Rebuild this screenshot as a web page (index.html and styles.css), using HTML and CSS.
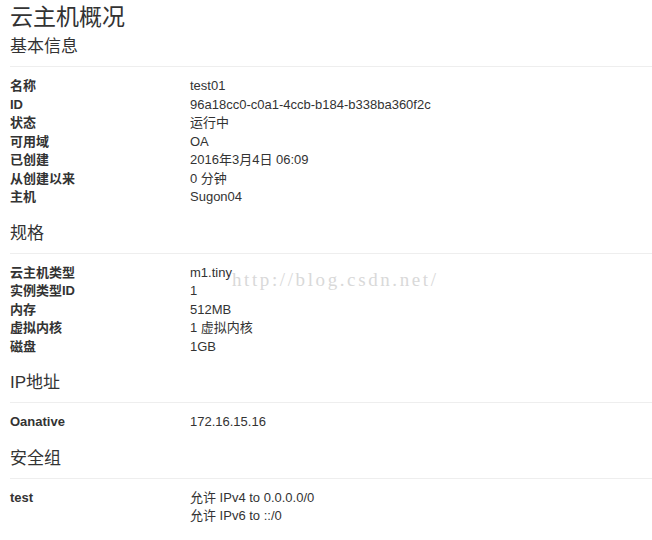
FILE: index.html
```html
<!DOCTYPE html>
<html lang="zh-CN">
<head>
  <meta charset="UTF-8">
  <title>云主机概况</title>
  <link rel="stylesheet" href="styles.css">
</head>
<body>

  <h1 class="page-title">云主机概况</h1>

  <!-- 基本信息 -->
  <h3 class="section-title">基本信息</h3>
  <dl class="info">
    <dt>名称</dt><dd>test01</dd>
    <dt>ID</dt><dd>96a18cc0-c0a1-4ccb-b184-b338ba360f2c</dd>
    <dt>状态</dt><dd>运行中</dd>
    <dt>可用域</dt><dd>OA</dd>
    <dt>已创建</dt><dd>2016年3月4日 06:09</dd>
    <dt>从创建以来</dt><dd>0 分钟</dd>
    <dt>主机</dt><dd>Sugon04</dd>
  </dl>

  <!-- 规格 -->
  <h3 class="section-title">规格</h3>
  <dl class="info">
    <dt>云主机类型</dt><dd>m1.tiny</dd>
    <dt>实例类型ID</dt><dd>1</dd>
    <dt>内存</dt><dd>512MB</dd>
    <dt>虚拟内核</dt><dd>1 虚拟内核</dd>
    <dt>磁盘</dt><dd>1GB</dd>
  </dl>

  <!-- IP地址 -->
  <h3 class="section-title">IP地址</h3>
  <dl class="info">
    <dt>Oanative</dt><dd>172.16.15.16</dd>
  </dl>

  <!-- 安全组 -->
  <h3 class="section-title">安全组</h3>
  <dl class="info">
    <dt>test</dt>
    <dd>
      <div>允许 IPv4 to 0.0.0.0/0</div>
      <div>允许 IPv6 to ::/0</div>
    </dd>
  </dl>

  <span class="watermark">http://blog.csdn.net/</span>

</body>
</html>
```

FILE: styles.css
```css
body {
  font-family: 'Liberation Sans', 'Noto Sans CJK SC', sans-serif;
  font-size: 13px;
  line-height: 18.5px;
  color: #333;
  background: #fff;
  margin: 0;
  padding: 0 0 0 10px;
  position: relative;
}
.page-title {
  font-size: 23px;
  font-weight: normal;
  line-height: 26px;
  margin: 4px 0 0;
}
.section-title {
  font-size: 17px;
  font-weight: normal;
  line-height: 20px;
  margin: 17px 0 0;
  padding-bottom: 9px;
  border-bottom: 1px solid #eee;
}
.page-title + .section-title {
  margin-top: 7px;
}
.info {
  display: grid;
  grid-template-columns: 180px 1fr;
  margin: 10px 0 0;
}
.info dt {
  font-weight: bold;
}
.info dd {
  margin: 0;
}
/* watermark stamped over the screenshot */
.watermark {
  position: absolute;
  left: 232px;
  top: 268px;
  font-family: 'Liberation Serif', serif;
  font-size: 19px;
  letter-spacing: 2.6px;
  line-height: 24px;
  color: #d9d9d9;
  pointer-events: none;
}
```
